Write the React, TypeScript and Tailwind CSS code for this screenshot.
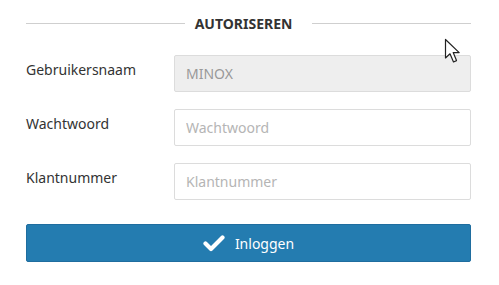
import { useState } from "react";

const font = { fontFamily: '"Noto Sans", "Open Sans", sans-serif' };

function Field({
  label,
  placeholder,
  value,
  disabled,
}: {
  label: string;
  placeholder: string;
  value?: string;
  disabled?: boolean;
}) {
  const [v, setV] = useState(value ?? "");
  return (
    <div className="flex items-center">
      <label className="w-[148px] shrink-0 pb-[8px] text-[14px] text-[#333]">{label}</label>
      <input
        value={v}
        onChange={(e) => setV(e.target.value)}
        disabled={disabled}
        placeholder={placeholder}
        className={`h-[37px] flex-1 rounded-[2px] border border-[#dcdcdc] px-[11px] text-[14px] outline-none placeholder:text-[#b5b5b5] ${
          disabled ? "bg-[#eeeeee] text-[#999]" : "bg-white text-[#333]"
        }`}
        style={font}
      />
    </div>
  );
}

function Cursor() {
  return (
    <svg
      className="absolute left-[444px] top-[38px]"
      width="18"
      height="27"
      viewBox="0 0 18 27"
      aria-hidden
    >
      <path
        d="M1.5 1.5 L1.5 20 L6 15.8 L9.5 24 L12.5 22.6 L9.2 14.6 L15.2 14.6 Z"
        fill="#fff"
        stroke="#222"
        strokeWidth="1.2"
        strokeLinejoin="round"
      />
    </svg>
  );
}

export default function App() {
  return (
    <div className="relative h-[285px] w-[499px] bg-white" style={font}>
      <div className="flex flex-col pl-[26px] pr-[28px] pt-[13px]">
        {/* heading */}
        <div className="flex items-center">
          <div className="h-px flex-1 bg-[#cfcfcf]" />
          <span className="ml-[10px] mr-[20px] text-[14px] font-bold text-[#333]">
            AUTORISEREN
          </span>
          <div className="h-px flex-1 bg-[#cfcfcf]" />
        </div>

        <div className="mt-[21px] flex flex-col gap-[17px]">
          <Field label="Gebruikersnaam" placeholder="Gebruikersnaam" value="MINOX" disabled />
          <Field label="Wachtwoord" placeholder="Wachtwoord" />
          <Field label="Klantnummer" placeholder="Klantnummer" />
        </div>

        <button className="mt-[24px] flex h-[38px] items-center justify-center gap-[10px] rounded-[2px] border border-[#1f6d9f] bg-[#247cb0] text-[14px] text-white">
          <svg width="22" height="18" viewBox="0 0 22 18" aria-hidden>
            <path
              d="M2.5 9.5 L8 15 L19.5 3.5"
              fill="none"
              stroke="#fff"
              strokeWidth="4.2"
              strokeLinecap="round"
              strokeLinejoin="round"
            />
          </svg>
          <span>Inloggen</span>
        </button>
      </div>
      <Cursor />
    </div>
  );
}
